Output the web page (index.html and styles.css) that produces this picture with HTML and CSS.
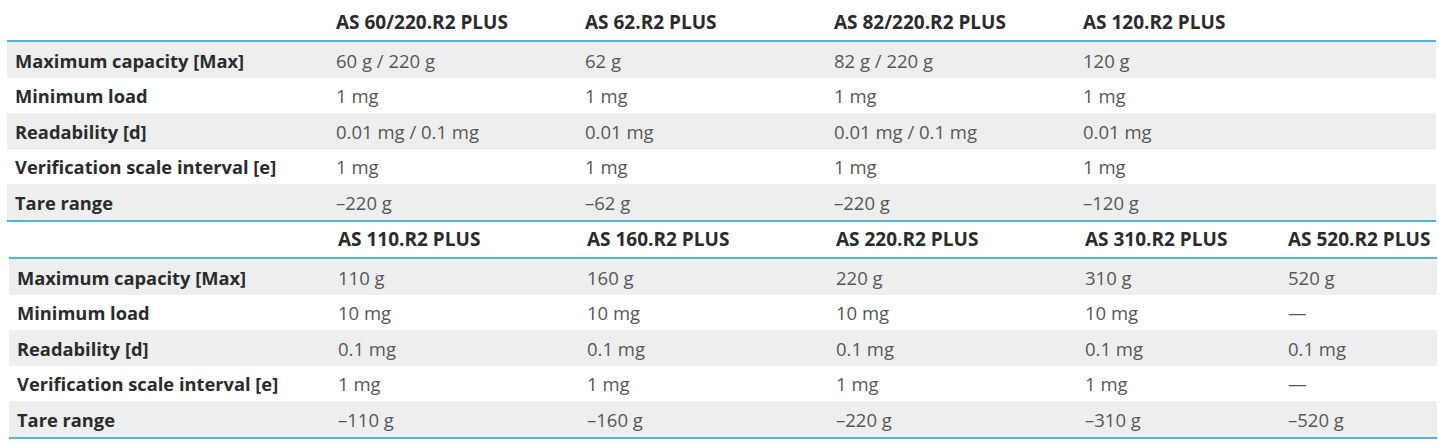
FILE: index.html
```html
<!DOCTYPE html>
<html lang="en">
<head>
<meta charset="utf-8">
<title>AS R2 PLUS specifications</title>
<link rel="stylesheet" href="styles.css">
</head>
<body>
<table class="spec spec-a">
  <colgroup>
    <col class="c-label"><col class="c-data"><col class="c-data"><col class="c-data"><col class="c-data"><col>
  </colgroup>
  <thead>
    <tr><th></th><th>AS 60/220.R2 PLUS</th><th>AS 62.R2 PLUS</th><th>AS 82/220.R2 PLUS</th><th>AS 120.R2 PLUS</th><th></th></tr>
  </thead>
  <tbody>
    <tr class="alt"><th>Maximum capacity [Max]</th><td>60 g / 220 g</td><td>62 g</td><td>82 g / 220 g</td><td>120 g</td><td></td></tr>
    <tr class="h35"><th>Minimum load</th><td>1 mg</td><td>1 mg</td><td>1 mg</td><td>1 mg</td><td></td></tr>
    <tr class="alt"><th>Readability [d]</th><td>0.01 mg / 0.1 mg</td><td>0.01 mg</td><td>0.01 mg / 0.1 mg</td><td>0.01 mg</td><td></td></tr>
    <tr class="h35"><th>Verification scale interval [e]</th><td>1 mg</td><td>1 mg</td><td>1 mg</td><td>1 mg</td><td></td></tr>
    <tr class="alt last"><th>Tare range</th><td>–220 g</td><td>–62 g</td><td>–220 g</td><td>–120 g</td><td></td></tr>
  </tbody>
</table>
<table class="spec spec-b">
  <colgroup>
    <col class="c-label"><col class="c-data"><col class="c-data"><col class="c-data"><col class="c-d4"><col>
  </colgroup>
  <thead>
    <tr class="h-short"><th></th><th>AS 110.R2 PLUS</th><th>AS 160.R2 PLUS</th><th>AS 220.R2 PLUS</th><th>AS 310.R2 PLUS</th><th>AS 520.R2 PLUS</th></tr>
  </thead>
  <tbody>
    <tr class="alt"><th>Maximum capacity [Max]</th><td>110 g</td><td>160 g</td><td>220 g</td><td>310 g</td><td>520 g</td></tr>
    <tr class="h35"><th>Minimum load</th><td>10 mg</td><td>10 mg</td><td>10 mg</td><td>10 mg</td><td>—</td></tr>
    <tr class="alt"><th>Readability [d]</th><td>0.1 mg</td><td>0.1 mg</td><td>0.1 mg</td><td>0.1 mg</td><td>0.1 mg</td></tr>
    <tr class="h35"><th>Verification scale interval [e]</th><td>1 mg</td><td>1 mg</td><td>1 mg</td><td>1 mg</td><td>—</td></tr>
    <tr class="alt last"><th>Tare range</th><td>–110 g</td><td>–160 g</td><td>–220 g</td><td>–310 g</td><td>–520 g</td></tr>
  </tbody>
</table>
</body>
</html>
```
FILE: styles.css
```css
html, body {
  margin: 0;
  padding: 0;
  background: #ffffff;
}
body {
  font-family: "Open Sans", "Noto Sans", "Liberation Sans", sans-serif;
  font-size: 18px;
  color: #555555;
}
.spec {
  border-collapse: separate;
  border-spacing: 0;
  table-layout: fixed;
}
.spec-a {
  margin-left: 7px;
  width: 1429px;
}
.spec-b {
  margin-left: 9px;
  width: 1428px;
}
.c-label { width: 322px; }
.c-data { width: 249px; }
.c-d4 { width: 203px; }

.spec th,
.spec td {
  padding: 0 0 0 7px;
  text-align: left;
  white-space: nowrap;
  vertical-align: middle;
}
.spec tbody th {
  padding-left: 8px;
  font-size: 18.3px;
  font-weight: 700;
  color: #2b2b2b;
}
.spec tbody td {
  font-size: 18.5px;
  font-weight: 400;
  color: #575757;
}
.spec thead tr {
  height: 42px;
}
.spec thead tr.h-short {
  height: 37px;
}
.spec thead th {
  font-size: 19px;
  font-weight: 700;
  color: #2b2b2b;
  vertical-align: bottom;
  padding-bottom: 5px;
  border-bottom: 2px solid #4bb7da;
}
.spec tbody tr { height: 36px; }
.spec tbody tr.h35 { height: 35px; }
.spec tbody tr.last { height: 38px; }
.spec tbody tr.last th,
.spec tbody tr.last td {
  border-bottom: 2px solid #4bb7da;
}
.spec tbody tr.alt th,
.spec tbody tr.alt td {
  background: #eeeeef;
}
```
